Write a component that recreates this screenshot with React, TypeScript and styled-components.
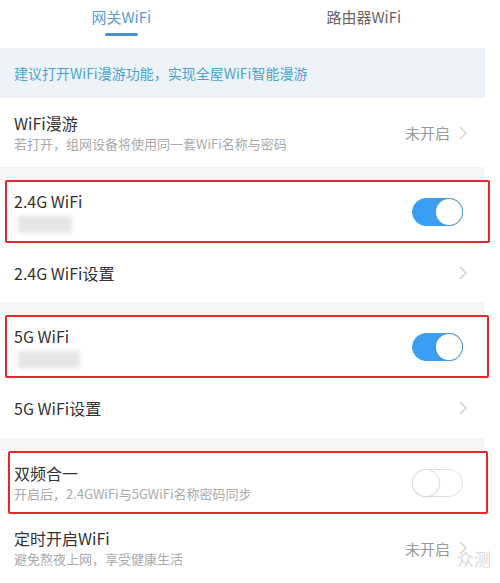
import React from 'react';
import styled, { createGlobalStyle } from 'styled-components';

const GlobalStyle = createGlobalStyle`
  body {
    margin: 0;
    background: #fff;
    font-family: "Noto Sans CJK SC", "Noto Sans", sans-serif;
  }
`;

const Page = styled.div`
  position: relative;
  width: 500px;
  height: 583px;
  overflow: hidden;
  background: #fff;
`;

const Tabs = styled.div`
  display: flex;
  height: 48px;
  width: 485px;
`;

const Tab = styled.div<{ active?: boolean }>`
  flex: 1;
  display: flex;
  flex-direction: column;
  align-items: center;
  padding-top: 6px;
  font-size: 15px;
  line-height: 22px;
  color: ${(p) => (p.active ? '#5b9bd0' : '#666')};
`;

const TabLine = styled.div`
  width: 33px;
  height: 3px;
  margin-top: 5px;
  border-radius: 2px;
  background: #4c8cc8;
`;

const Banner = styled.div`
  width: 485px;
  height: 50px;
  display: flex;
  align-items: center;
  padding-left: 14px;
  box-sizing: border-box;
  background: #eef3fa;
  color: #4aa3cf;
  font-size: 14px;
`;

const Band = styled.div`
  width: 485px;
  height: 13px;
  background: #f6f6f8;
`;

const Row = styled.div<{ h: number }>`
  height: ${(p) => p.h}px;
  display: flex;
  align-items: center;
  padding: 0 33px 0 14px;
  box-sizing: border-box;
`;

// red annotation frame around a switch row; inner content stays on the 14px grid
const Marked = styled.div<{ left: number; right: number }>`
  height: 63px;
  margin: 0 ${(p) => p.right}px 0 ${(p) => p.left}px;
  border: 2px solid #e2262b;
  border-radius: 2px;
  box-sizing: border-box;
  display: flex;
  align-items: center;
  padding: 0 ${(p) => 35 - p.right}px 0 ${(p) => 12 - p.left}px;
`;

const Texts = styled.div`
  flex: 1;
  display: flex;
  flex-direction: column;
`;

const Title = styled.div`
  font-size: 16px;
  line-height: 22px;
  color: #333;
`;

const Sub = styled.div`
  font-size: 13px;
  line-height: 20px;
  color: #aaa;
`;

const Masked = styled.div<{ w: number }>`
  width: ${(p) => p.w}px;
  height: 17px;
  margin: 4px 0 0 4px;
  background: #e6e6e6;
  filter: blur(2px);
`;

const Value = styled.span`
  font-size: 15px;
  color: #999;
  margin-right: 9px;
`;

const Chevron = () => (
  <svg width="8" height="14" viewBox="0 0 8 14">
    <path d="M1 1 L7 7 L1 13" fill="none" stroke="#cfcfcf" strokeWidth="1.3" />
  </svg>
);

const Track = styled.div<{ on?: boolean }>`
  position: relative;
  width: 51px;
  height: 28px;
  border-radius: 14px;
  box-sizing: border-box;
  background: ${(p) => (p.on ? '#3a9ff2' : '#fff')};
  border: 1px solid ${(p) => (p.on ? '#3a9ff2' : '#e0e0e0')};
`;

const Knob = styled.div<{ on?: boolean }>`
  position: absolute;
  top: 0;
  left: ${(p) => (p.on ? '23px' : '0')};
  width: 26px;
  height: 26px;
  border-radius: 50%;
  background: #fff;
  box-shadow: 0 0 0 1px ${(p) => (p.on ? '#5a9ec0' : '#dcdcdc')}, 0 1px 2px rgba(0, 0, 0, 0.12);
`;

const Switch = ({ on }: { on?: boolean }) => (
  <Track on={on}>
    <Knob on={on} />
  </Track>
);

const Watermark = styled.div`
  position: absolute;
  right: 9px;
  bottom: 12px;
  font-size: 17px;
  color: rgba(190, 190, 190, 0.6);
`;

export default function App() {
  return (
    <Page>
      <GlobalStyle />
      <Tabs>
        <Tab active>
          网关WiFi
          <TabLine />
        </Tab>
        <Tab>路由器WiFi</Tab>
      </Tabs>
      <Banner>建议打开WiFi漫游功能，实现全屋WiFi智能漫游</Banner>

      <Row h={69}>
        <Texts>
          <Title>WiFi漫游</Title>
          <Sub>若打开，组网设备将使用同一套WiFi名称与密码</Sub>
        </Texts>
        <Value>未开启</Value>
        <Chevron />
      </Row>
      <Band />

      <Marked left={5} right={10}>
        <Texts>
          <Title>2.4G WiFi</Title>
          <Masked w={54} />
        </Texts>
        <Switch on />
      </Marked>
      <Row h={59}>
        <Texts>
          <Title>2.4G WiFi设置</Title>
        </Texts>
        <Chevron />
      </Row>
      <Band />

      <Marked left={5} right={11}>
        <Texts>
          <Title>5G WiFi</Title>
          <Masked w={62} />
        </Texts>
        <Switch on />
      </Marked>
      <Row h={60}>
        <Texts>
          <Title>5G WiFi设置</Title>
        </Texts>
        <Chevron />
      </Row>
      <Band />

      <Marked left={8} right={12}>
        <Texts>
          <Title>双频合一</Title>
          <Sub>开启后，2.4GWiFi与5GWiFi名称密码同步</Sub>
        </Texts>
        <Switch />
      </Marked>
      <Row h={68}>
        <Texts>
          <Title>定时开启WiFi</Title>
          <Sub>避免熬夜上网，享受健康生活</Sub>
        </Texts>
        <Value>未开启</Value>
        <Chevron />
      </Row>
      <Watermark>众测</Watermark>
    </Page>
  );
}
